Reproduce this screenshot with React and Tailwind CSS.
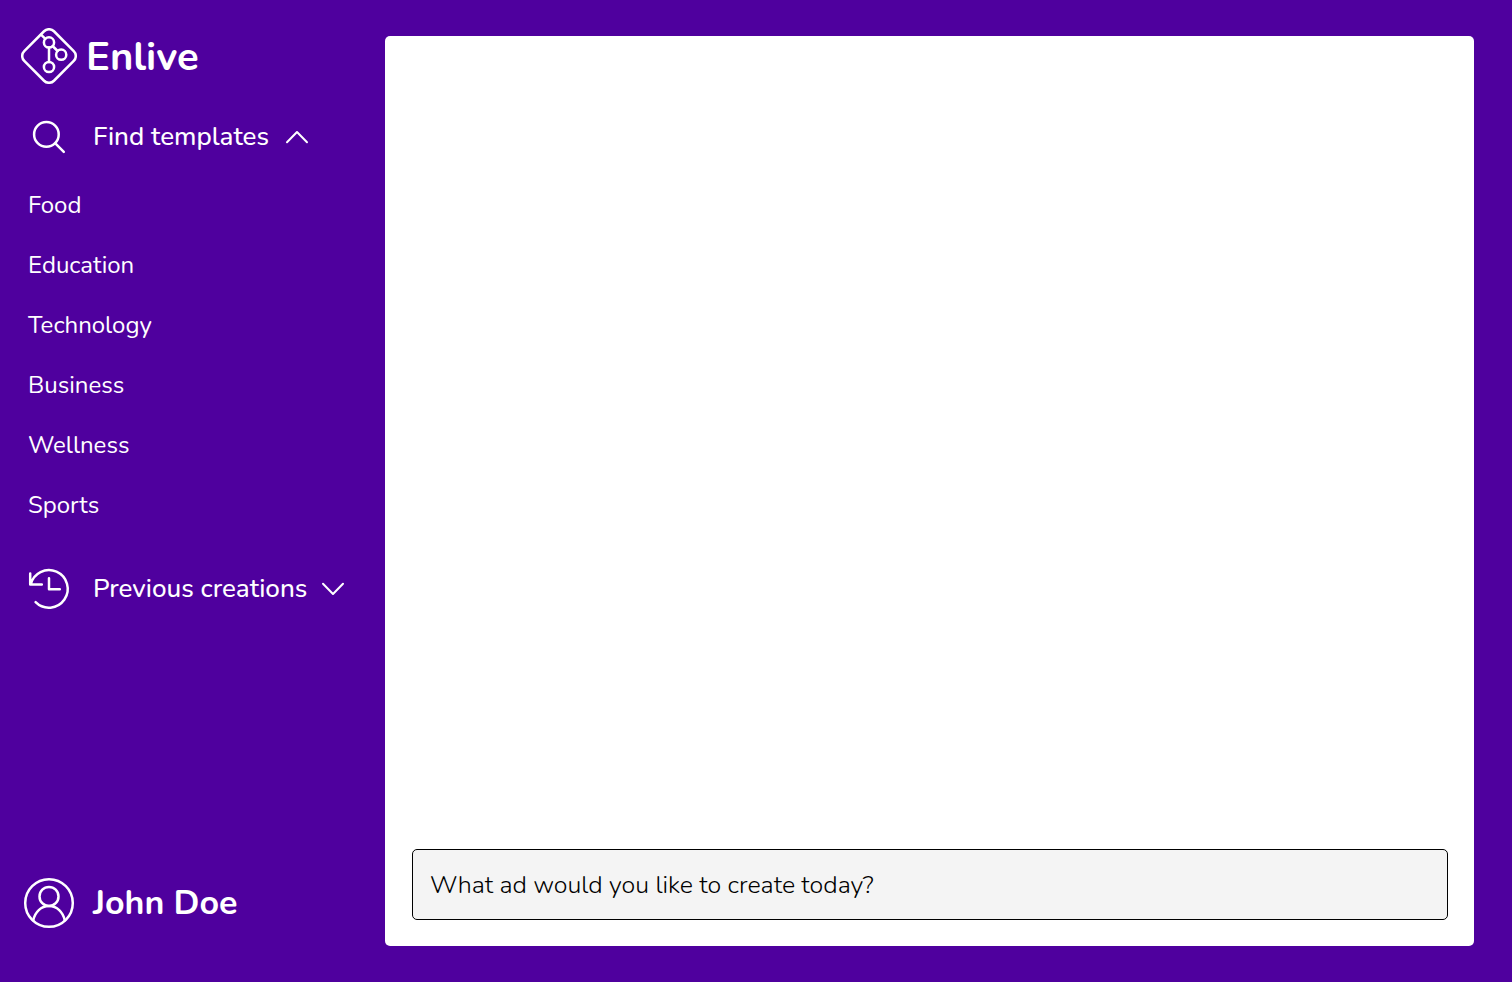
import { useState } from "react";

const categories = ["Food", "Education", "Technology", "Business", "Wellness", "Sports"];

function Icon({ children }) {
  return (
    <svg
      viewBox="0 0 56 56"
      className="size-14 shrink-0"
      fill="none"
      stroke="currentColor"
      strokeWidth="2.5"
      strokeLinecap="round"
      strokeLinejoin="round"
      aria-hidden="true"
    >
      {children}
    </svg>
  );
}

function LogoIcon() {
  return (
    <Icon>
      <rect x="7" y="7" width="42" height="42" rx="7" transform="rotate(45 28 28)" />
      <circle cx="28" cy="14.4" r="5.1" />
      <circle cx="40.2" cy="26.7" r="5.1" />
      <circle cx="28" cy="39" r="5.1" />
      <path d="M20 6.6l4.4 4.2M28 19.5v14.4M31.6 18l5 5" />
    </Icon>
  );
}

function SearchIcon() {
  return (
    <Icon>
      <circle cx="25.4" cy="25.4" r="12.3" />
      <path d="M34.3 34.3l8.5 8.5" />
    </Icon>
  );
}

function HistoryIcon() {
  return (
    <Icon>
      <path d="M9.6 23.6A18.8 18.8 0 1 1 14.6 41.2M9.2 12.4v11h11.6M28 17.2v11h10.8" />
    </Icon>
  );
}

function UserIcon() {
  return (
    <Icon>
      <circle cx="28" cy="28" r="23.8" />
      <circle cx="28" cy="21.4" r="9.5" />
      <path d="M12.2 45.4C14 37 20 31.1 28 31.1S42 37 43.8 45.4" />
    </Icon>
  );
}

function Chevron({ open }) {
  return (
    <svg
      viewBox="0 0 24 14"
      className="h-[14px] w-6 shrink-0"
      fill="none"
      stroke="currentColor"
      strokeWidth="2"
      strokeLinecap="round"
      strokeLinejoin="round"
      aria-hidden="true"
    >
      <path d={open ? "M2 12.3L12 2L22 12.3" : "M2 1.7L12 12L22 1.7"} />
    </svg>
  );
}

export default function App() {
  const [templatesOpen, setTemplatesOpen] = useState(true);
  const [historyOpen, setHistoryOpen] = useState(false);

  return (
    <div className="flex min-h-screen bg-[#4f009e] font-['Nunito','Lato',sans-serif] text-white">
      <aside className="flex w-[385px] shrink-0 flex-col pt-7 pb-[51px] pl-[21px]">
        <a href="#" className="flex items-center gap-[9px] self-start">
          <LogoIcon />
          <span className="pt-[2px] text-[40px] leading-[54px] font-bold">Enlive</span>
        </a>

        <nav className="mt-[25px]">
          <button
            type="button"
            aria-expanded={templatesOpen}
            onClick={() => setTemplatesOpen(!templatesOpen)}
            className="flex items-center text-[26px] leading-9 font-medium"
          >
            <SearchIcon />
            <span className="mr-4 ml-4">Find templates</span>
            <Chevron open={templatesOpen} />
          </button>

          {templatesOpen && (
            <ul className="mt-[10px] pl-[7px]">
              {categories.map((name) => (
                <li key={name}>
                  <a href="#" className="block text-[24px] leading-[60px]">
                    {name}
                  </a>
                </li>
              ))}
            </ul>
          )}

          <button
            type="button"
            aria-expanded={historyOpen}
            onClick={() => setHistoryOpen(!historyOpen)}
            className="mt-[26px] flex items-center text-[26px] leading-9 font-medium"
          >
            <HistoryIcon />
            <span className="mr-[14px] ml-4">Previous creations</span>
            <Chevron open={historyOpen} />
          </button>
        </nav>

        <button type="button" className="mt-auto flex items-center gap-4 self-start">
          <UserIcon />
          <span className="text-[34px] leading-[56px] font-bold">John Doe</span>
        </button>
      </aside>

      <main className="my-9 mr-[38px] flex min-w-0 flex-1 flex-col justify-end rounded-[5px] bg-white pr-[26px] pb-[26px] pl-[27px]">
        <form onSubmit={(event) => event.preventDefault()}>
          <input
            type="text"
            aria-label="Ad description"
            placeholder="What ad would you like to create today?"
            className="h-[71px] w-full rounded-[5px] border border-black bg-[#f4f4f4] px-[17px] text-[25px] font-[350] text-black placeholder:text-black placeholder:opacity-100"
          />
        </form>
      </main>
    </div>
  );
}
